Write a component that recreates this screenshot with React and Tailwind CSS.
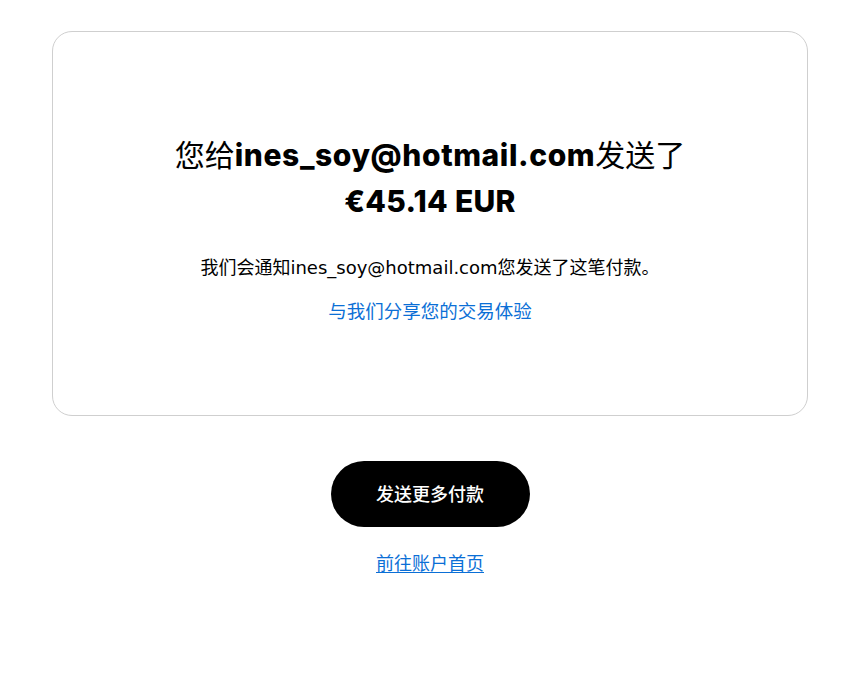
import React from "react";

const heading = "font-['Inter','Noto_Sans_CJK_SC',sans-serif]";
const body = "font-['DejaVu_Sans','Noto_Sans_CJK_SC',sans-serif]";

function SentCard({ email, amount }) {
  return (
    <div className="flex flex-col items-center rounded-[20px] border border-[#cfcfcf] bg-white px-8 pt-[100px] pb-[91px] text-center">
      <h1 className={`text-[30px] leading-[46px] text-black ${heading}`}>
        <span className="font-normal">您给</span>
        <span className="font-extrabold tracking-[0.6px]">{email}</span>
        <span className="font-normal">发送了</span>
        <br />
        <span className="font-extrabold tracking-[0.3px]">{amount}</span>
      </h1>
      <p className={`mt-[32px] text-[18px] leading-6 text-black ${body}`}>
        我们会通知{email}您发送了这笔付款。
      </p>
      <a href="#" className={`mt-[20px] text-[18.5px] leading-6 text-[#0b6fd6] ${body}`}>
        与我们分享您的交易体验
      </a>
    </div>
  );
}

export default function App() {
  const email = "ines_soy@hotmail.com";
  return (
    <div className={`min-h-[695px] bg-white pl-[52px] pr-[58px] pt-[31px] ${body}`}>
      <SentCard email={email} amount="€45.14 EUR" />
      <div className="mt-[45px] flex flex-col items-center">
        <button className="h-[66px] w-[199px] rounded-full bg-black text-[18px] font-medium text-white">
          发送更多付款
        </button>
        <a href="#" className="mt-[25px] text-[18px] leading-6 text-[#0b6fd6] underline underline-offset-2">
          前往账户首页
        </a>
      </div>
    </div>
  );
}
